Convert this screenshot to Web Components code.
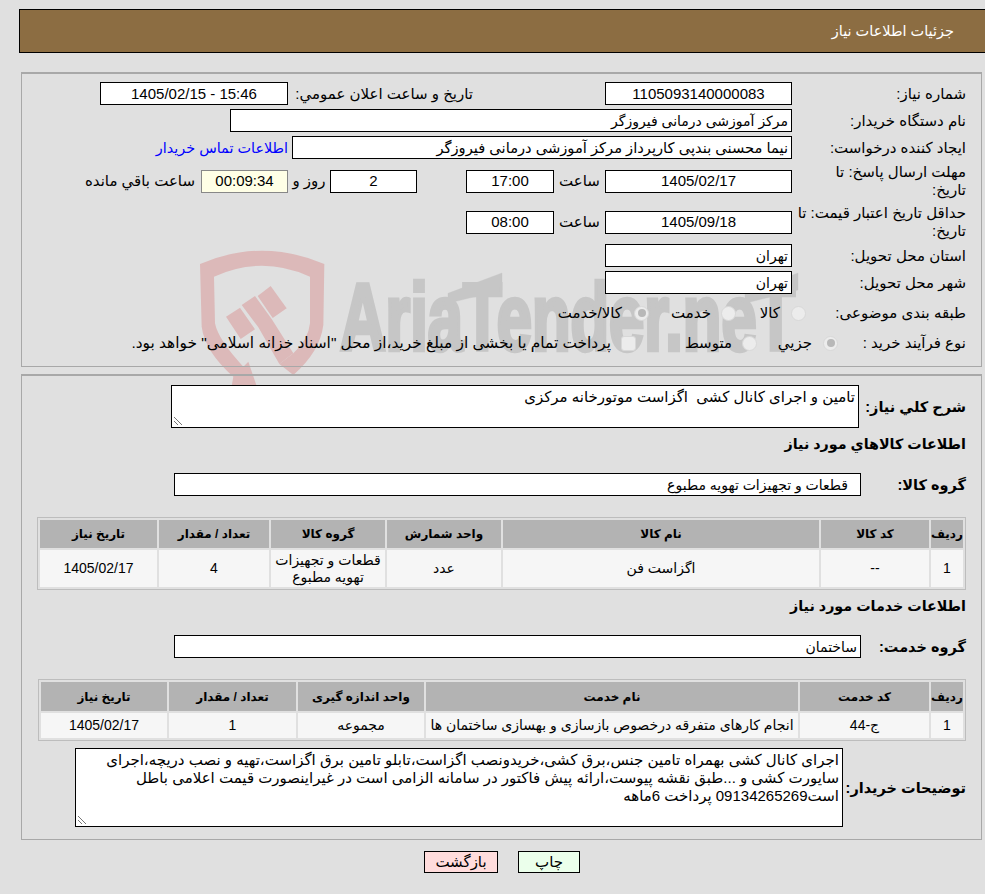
<!DOCTYPE html>
<html lang="fa" dir="rtl">
<head>
<meta charset="utf-8">
<title>جزئیات اطلاعات نیاز</title>
<style>
  html, body { margin: 0; background: #e0e0e0; }
  body { font: 14px "Liberation Sans", "DejaVu Sans", sans-serif; color: #000; position: relative; height: 894px; overflow: hidden; }
</style>
</head>
<body>
<need-page></need-page>

<script>
const FONT = '"Liberation Sans", "DejaVu Sans", sans-serif';

class NeedHeader extends HTMLElement {
  constructor() {
    super();
    this.attachShadow({ mode: "open" });
    this.shadowRoot.innerHTML = `
      <style>
        :host { display: flex; align-items: center; box-sizing: border-box; height: 44px; margin: 9px 0 0 0; width: 966px; padding: 0 31px 0 0; background: #8c6d42; border: 1px solid #000; border-right: 0; color: #fff; font-size: 14.5px; }
      </style>
      <slot></slot>`;
  }
}
customElements.define("need-header", NeedHeader);

class NeedPanel extends HTMLElement {
  constructor() {
    super();
    this.attachShadow({ mode: "open" });
    this.shadowRoot.innerHTML = `
      <style>
        :host { display: flex; flex-direction: column; gap: 4px; box-sizing: border-box; width: 961px; margin-right: 3px; border: 1px solid #a8a8a8; border-top-width: 2px; padding: 8px 15px 12px 15px; position: relative; }
      </style>
      <slot></slot>`;
  }
}
customElements.define("need-panel", NeedPanel);

class FormRow extends HTMLElement {
  constructor() {
    super();
    this.attachShadow({ mode: "open" });
    this.shadowRoot.innerHTML = `
      <style>
        :host { display: flex; align-items: center; min-height: 23px; line-height: 18px; font-size: 15px; }
        .label { flex: 0 0 var(--label, 170px); min-width: 0; margin-left: 4px; }
        :host([bold]) .label { font-weight: bold; font-size: 14.5px; flex-basis: var(--label, 105px); margin-left: 5px; white-space: nowrap; }
      </style>
      <div class="label"><slot name="label"></slot></div>
      <slot></slot>`;
  }
}
customElements.define("form-row", FormRow);

class FieldBox extends HTMLElement {
  constructor() {
    super();
    this.attachShadow({ mode: "open" });
    this.shadowRoot.innerHTML = `
      <style>
        :host { display: flex; align-items: center; box-sizing: border-box; flex: none; height: 23px; background: #fff; border: 1px solid #000; padding: 0 3px; white-space: nowrap; overflow: hidden; font-size: 14px; }
        :host([center]) { justify-content: center; font-size: 15px; }
        :host([timer]) { background: #ffffe6; border-color: #888; }
      </style>
      <slot></slot>`;
  }
}
customElements.define("field-box", FieldBox);

class TextBlock extends HTMLElement {
  constructor() {
    super();
    this.attachShadow({ mode: "open" });
    this.shadowRoot.innerHTML = `
      <style>
        :host { display: block; box-sizing: border-box; flex: none; position: relative; background: #fff; border: 1px solid #000; padding: 2px 3px; line-height: 18px; font-size: 15px; }
        svg { position: absolute; left: 1px; bottom: 1px; }
      </style>
      <slot></slot>
      <svg width="10" height="10" viewBox="0 0 10 10" fill="none" stroke="#777" stroke-width="1">
        <path d="M1 1L9 9M1 5L5 9"/>
      </svg>`;
  }
}
customElements.define("text-block", TextBlock);

class ChoiceMark extends HTMLElement {
  constructor() {
    super();
    this.attachShadow({ mode: "open" });
    this.shadowRoot.innerHTML = `
      <style>
        :host { display: inline-flex; align-items: center; justify-content: center; flex: none; box-sizing: border-box; width: 15px; height: 15px; border-radius: 50%; background: #ececec; border: 1px solid #d8d8d8; }
        :host([square]) { border-radius: 3px; }
        i { display: none; width: 8px; height: 8px; border-radius: 50%; background: #b8b8b8; }
        :host([on]) i { display: block; }
      </style>
      <i></i>`;
  }
}
customElements.define("choice-mark", ChoiceMark);

class SectionTitle extends HTMLElement {
  constructor() {
    super();
    this.attachShadow({ mode: "open" });
    this.shadowRoot.innerHTML = `
      <style>
        :host { display: block; font-weight: bold; font-size: 14.3px; line-height: 20px; }
      </style>
      <slot></slot>`;
  }
}
customElements.define("section-title", SectionTitle);

class NeedTable extends HTMLElement {
  constructor() {
    super();
    this.attachShadow({ mode: "open" });
  }
  connectedCallback() {
    const cols = this.getAttribute("cols").split(",");
    const heads = JSON.parse(this.getAttribute("heads"));
    const rows = JSON.parse(this.getAttribute("rows"));
    const colgroup = cols.map(c => `<col style="width:${c}px">`).join("");
    const th = heads.map(h => `<th>${h}</th>`).join("");
    const tr = rows.map(r => `<tr>${r.map(c => `<td>${c}</td>`).join("")}</tr>`).join("");
    this.shadowRoot.innerHTML = `
      <style>
        :host { display: block; box-sizing: border-box; width: 928px; font-size: 14px; }
        table { width: 100%; table-layout: fixed; border-collapse: separate; border-spacing: 2px; border: 1px solid #bdbdbd; }
        th { background: #b3b3b3; font-weight: bold; font-size: 12px; height: var(--head, 28px); padding: 0; }
        td { background: #f6f6f6; text-align: center; line-height: 17px; height: var(--cell, 37px); padding: 0 2px; }
      </style>
      <table><colgroup>${colgroup}</colgroup><thead><tr>${th}</tr></thead><tbody>${tr}</tbody></table>`;
  }
}
customElements.define("need-table", NeedTable);

class PageButton extends HTMLElement {
  constructor() {
    super();
    this.attachShadow({ mode: "open" });
    this.shadowRoot.innerHTML = `
      <style>
        :host { display: flex; align-items: center; justify-content: center; box-sizing: border-box; height: 22px; border: 1px solid #000; cursor: pointer; font-size: 15px; }
      </style>
      <slot></slot>`;
  }
}
customElements.define("page-button", PageButton);

class AriaWatermark extends HTMLElement {
  constructor() {
    super();
    this.attachShadow({ mode: "open" });
    this.shadowRoot.innerHTML = `
      <style>
        :host { position: absolute; left: 190px; top: 240px; width: 630px; height: 146px; pointer-events: none; z-index: 0; direction: ltr; }
        svg { display: block; overflow: hidden; }
      </style>
      <svg width="630" height="146" viewBox="0 0 1890 438">
        <g fill="#dcb9b9">
          <path fill-rule="evenodd" d="M30 72Q215 -8 403 72L400 255Q390 335 310 405L268 372L310 340Q355 300 360 250L360 110Q215 45 72 110L75 250Q85 300 160 380L175 365L200 438L125 438L130 410Q45 335 35 260Z"/>
          <path d="M108 230L150 203L195 268L152 297Z"/>
          <path d="M155 195L195 168L245 237L310 340L268 372L205 262Z"/>
          <path d="M203 168L242 138L290 205L248 234Z"/>
        </g>
        <g fill="#c6c6c6" stroke="#c6c6c6">
          <path d="M774 160L936 99L936 150L774 190Z"/>
          <path d="M1665 160L1824 99L1824 150L1665 190Z"/>
          <text transform="translate(450 330) scale(.672 1)" stroke-width="14" font-family="'Liberation Sans', sans-serif" font-weight="bold" font-size="282">AriaTender.neT</text>
        </g>
      </svg>`;
  }
}
customElements.define("aria-watermark", AriaWatermark);

class NeedPage extends HTMLElement {
  constructor() {
    super();
    this.attachShadow({ mode: "open" });
    this.shadowRoot.innerHTML = `
      <style>
        :host { display: block; font: 14px ${FONT}; }
        .main { position: relative; z-index: 1; }
        need-panel + need-panel { margin-top: 7px; }
        .first { margin-top: 19px; }
        .blue { color: #00f; margin-right: 4px; white-space: nowrap; font-size: 14.4px; }
        .nw { white-space: nowrap; }
        .actions { display: flex; justify-content: center; gap: 20px; margin-top: 11px; padding-left: 19px; direction: ltr; }
      </style>
      <aria-watermark></aria-watermark>
      <div class="main">
        <need-header>جزئیات اطلاعات نیاز</need-header>

        <need-panel class="first">
          <form-row>
            <span slot="label">شماره نیاز:</span>
            <field-box center style="width:187px">1105093140000083</field-box>
            <span class="nw" style="margin-right:132px;width:180px">تاریخ و ساعت اعلان عمومي:</span>
            <field-box center dir="ltr" style="width:188px;margin-right:5px">1405/02/15 - 15:46</field-box>
          </form-row>
          <form-row>
            <span slot="label">نام دستگاه خریدار:</span>
            <field-box style="width:562px">مرکز آموزشی درمانی فیروزگر</field-box>
          </form-row>
          <form-row>
            <span slot="label">ایجاد کننده درخواست:</span>
            <field-box style="width:500px;font-size:14.7px">نیما محسنی بندپی کارپرداز مرکز آموزشی درمانی فیروزگر</field-box>
            <span class="blue">اطلاعات تماس خریدار</span>
          </form-row>
          <form-row>
            <span slot="label">مهلت ارسال پاسخ: تا<br>تاریخ:</span>
            <field-box center style="width:187px">1405/02/17</field-box>
            <span class="nw" style="width:51px;text-align:center">ساعت</span>
            <field-box center style="width:88px">17:00</field-box>
            <field-box center style="width:87px;margin-right:49px">2</field-box>
            <span class="nw" style="width:42px;text-align:center">روز و</span>
            <field-box center timer style="width:87px">00:09:34</field-box>
            <span class="nw" style="margin-right:6px">ساعت باقي مانده</span>
          </form-row>
          <form-row style="margin-top:1px">
            <span slot="label">حداقل تاریخ اعتبار قیمت: تا<br>تاریخ:</span>
            <field-box center style="width:187px">1405/09/18</field-box>
            <span class="nw" style="width:51px;text-align:center">ساعت</span>
            <field-box center style="width:88px">08:00</field-box>
          </form-row>
          <form-row>
            <span slot="label">استان محل تحویل:</span>
            <field-box style="width:187px">تهران</field-box>
          </form-row>
          <form-row>
            <span slot="label">شهر محل تحویل:</span>
            <field-box style="width:187px">تهران</field-box>
          </form-row>
          <form-row style="min-height:30px">
            <span slot="label">طبقه بندی موضوعی:</span>
            <choice-mark style="margin-right:-14px"></choice-mark>
            <span class="nw" style="margin-right:11px;width:44px">کالا</span>
            <choice-mark></choice-mark>
            <span class="nw" style="margin-right:10px;width:62px">خدمت</span>
            <choice-mark on></choice-mark>
            <span class="nw" style="margin-right:12px">کالا/خدمت</span>
          </form-row>
          <form-row style="min-height:22px">
            <span slot="label">نوع فرآیند خرید :</span>
            <choice-mark on style="margin-right:-46px"></choice-mark>
            <span class="nw" style="margin-right:11px;width:55px">جزيي</span>
            <choice-mark></choice-mark>
            <span class="nw" style="margin-right:10px;width:96px">متوسط</span>
            <choice-mark square></choice-mark>
            <span class="nw" style="margin-right:10px;font-size:15.4px">پرداخت تمام یا بخشی از مبلغ خرید،از محل "اسناد خزانه اسلامی" خواهد بود.</span>
          </form-row>
        </need-panel>

        <need-panel style="gap:0;padding-top:9px;padding-bottom:12px">
          <form-row bold>
            <span slot="label">شرح كلي نیاز:</span>
            <text-block style="width:688px;height:43px;margin-right:-3px">تامین و اجرای کانال کشی&nbsp; اگزاست موتورخانه مرکزی</text-block>
          </form-row>
          <section-title style="margin-top:6px">اطلاعات کالاهاي مورد نیاز</section-title>
          <form-row bold style="margin-top:19px">
            <span slot="label">گروه کالا:</span>
            <field-box style="width:687px;padding-right:12px;margin-right:-5px">قطعات و تجهیزات تهویه مطبوع</field-box>
          </form-row>
          <need-table style="margin-top:21px" cols="32,108,316,114,114,110,117"
            heads='["ردیف","کد کالا","نام کالا","واحد شمارش","گروه کالا","تعداد / مقدار","تاریخ نیاز"]'
            rows='[["1","--","اگزاست فن","عدد","قطعات و تجهیزات تهویه مطبوع","4","1405/02/17"]]'></need-table>
          <section-title style="margin-top:6px">اطلاعات خدمات مورد نیاز</section-title>
          <form-row bold style="margin-top:19px">
            <span slot="label">گروه خدمت:</span>
            <field-box style="width:687px;margin-right:-5px">ساختمان</field-box>
          </form-row>
          <need-table style="margin-top:21px;--head:29px;--cell:25px" cols="32,129,372,126,127,126"
            heads='["ردیف","کد خدمت","نام خدمت","واحد اندازه گیری","تعداد / مقدار","تاریخ نیاز"]'
            rows='[["1","ج-44","انجام کارهای متفرقه درخصوص بازسازی و بهسازی ساختمان ها","مجموعه","1","1405/02/17"]]'></need-table>
          <form-row bold style="margin-top:7px;--label:118px">
            <span slot="label">توضیحات خریدار:</span>
            <text-block style="width:768px;height:79px">اجرای کانال کشی بهمراه تامین جنس،برق کشی،خریدونصب اگزاست،تابلو تامین برق اگزاست،تهیه و نصب دریچه،اجرای سایورت کشی و ...طبق نقشه پیوست،ارائه پیش فاکتور در سامانه الزامی است در غیراینصورت قیمت اعلامی باطل است09134265269 پرداخت 6ماهه</text-block>
          </form-row>
        </need-panel>

        <div class="actions">
          <page-button style="width:74px;background:#ffdcdc">بازگشت</page-button>
          <page-button style="width:62px;background:#ebffeb">چاپ</page-button>
        </div>
      </div>`;
  }
}
customElements.define("need-page", NeedPage);
</script>
</body>
</html>
